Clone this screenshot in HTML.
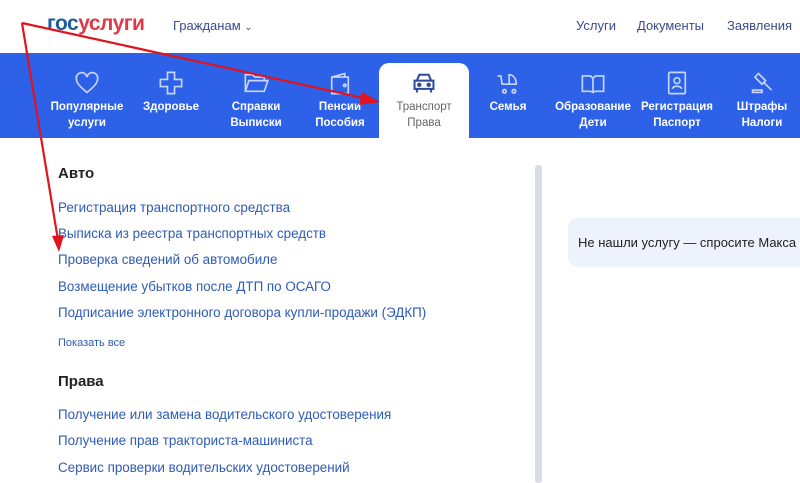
<!DOCTYPE html><html><head><meta charset="utf-8"><style>
*{margin:0;padding:0;box-sizing:border-box}
body{width:800px;height:483px;overflow:hidden;background:#fff;font-family:"Liberation Sans",sans-serif;position:relative}
.a{position:absolute;white-space:nowrap}
.top{color:#3a4b8c;font-size:13px}
.band{position:absolute;left:0;top:53px;width:800px;height:85px;background:#2d62e8}
.tab{position:absolute;left:379px;top:63px;width:90px;height:75px;background:#fff;border-radius:10px 10px 0 0}
.it{position:absolute;top:99px;width:90px;margin-left:-45px;text-align:center;color:#fff;font-size:11.5px;font-weight:bold;line-height:16px}
.it svg{position:absolute;left:32px;top:-29px}
.l{position:absolute;left:58px;color:#2e5bb5;font-size:13.4px;white-space:nowrap}
.h{position:absolute;left:58px;color:#222;font-size:15px;font-weight:bold}
</style></head><body>
<div class="a" style="left:47px;top:12px;font-size:21px;font-weight:bold;letter-spacing:-0.5px"><span style="color:#1d5d9b">гос</span><span style="color:#e03848">услуги</span></div>
<div class="a top" style="left:173px;top:18px">Гражданам <span style="font-size:10px">&#8964;</span></div>
<div class="a top" style="left:576px;top:18px">Услуги</div>
<div class="a top" style="left:637px;top:18px">Документы</div>
<div class="a top" style="left:727px;top:18px">Заявления</div>
<div class="band"></div><div class="tab"></div>
<div class="it" style="left:87px"><svg width="26" height="26" viewBox="0 0 22 22" fill="none" stroke="#c8d6ff" stroke-width="1.4"><path d="M11 19C5 14 2 11 2 7.5A4.5 4.5 0 0 1 11 6a4.5 4.5 0 0 1 9 1.5C20 11 17 14 11 19z"/></svg>Популярные<br>услуги</div>
<div class="it" style="left:171px"><svg width="26" height="26" viewBox="0 0 22 22" fill="none" stroke="#c8d6ff" stroke-width="1.4"><path d="M8 2h6v6h6v6h-6v6H8v-6H2V8h6z"/></svg>Здоровье</div>
<div class="it" style="left:256px"><svg width="26" height="26" viewBox="0 0 22 22" fill="none" stroke="#c8d6ff" stroke-width="1.4"><path d="M2 18V4h6l2 2h8v3M2 18l3-9h16l-3 9z"/></svg>Справки<br>Выписки</div>
<div class="it" style="left:340px"><svg width="26" height="26" viewBox="0 0 22 22" fill="none" stroke="#c8d6ff" stroke-width="1.4"><path d="M4 6l11-3v3M4 6h14v14H4z"/><circle cx="15" cy="13" r="1"/></svg>Пенсии<br>Пособия</div>
<div class="it" style="left:424px;color:#666;font-weight:normal"><svg width="26" height="26" viewBox="0 0 22 22" fill="none" stroke="#2d4a9c" stroke-width="1.7"><path d="M5 9l2-5h8l2 5M3 9h16v7H3zM5 16v3M17 16v3"/><circle cx="7" cy="12.5" r="1"/><circle cx="15" cy="12.5" r="1"/></svg>Транспорт<br>Права</div>
<div class="it" style="left:508px"><svg width="26" height="26" viewBox="0 0 22 22" fill="none" stroke="#c8d6ff" stroke-width="1.4"><path d="M2 5h3l1 7h12c0-4-2-8-6-8v8"/><circle cx="8" cy="18" r="1.5"/><circle cx="16" cy="18" r="1.5"/></svg>Семья</div>
<div class="it" style="left:593px"><svg width="26" height="26" viewBox="0 0 22 22" fill="none" stroke="#c8d6ff" stroke-width="1.4"><path d="M2 5h7l2 2 2-2h7v13h-7l-2 1-2-1H2zM11 7v12"/></svg>Образование<br>Дети</div>
<div class="it" style="left:677px"><svg width="26" height="26" viewBox="0 0 22 22" fill="none" stroke="#c8d6ff" stroke-width="1.4"><rect x="4" y="2" width="14" height="18" rx="1"/><circle cx="11" cy="9" r="2.5"/><path d="M7 16c1-3 7-3 8 0"/></svg>Регистрация<br>Паспорт</div>
<div class="it" style="left:762px"><svg width="26" height="26" viewBox="0 0 22 22" fill="none" stroke="#c8d6ff" stroke-width="1.4"><path d="M8 3l6 6-3 3-6-6zM12 10l7 7M3 19h8v-2H3z"/></svg>Штрафы<br>Налоги</div>
<div style="position:absolute;left:535px;top:165px;width:7px;height:318px;background:#d7dce6;border-radius:3px"></div>
<div class="h" style="top:165px">Авто</div>
<div class="l" style="top:200px">Регистрация транспортного средства</div>
<div class="l" style="top:226px">Выписка из реестра транспортных средств</div>
<div class="l" style="top:252px">Проверка сведений об автомобиле</div>
<div class="l" style="top:279px">Возмещение убытков после ДТП по ОСАГО</div>
<div class="l" style="top:305px">Подписание электронного договора купли-продажи (ЭДКП)</div>
<div class="l" style="top:337px;font-size:11px">Показать все</div>
<div class="h" style="top:373px">Права</div>
<div class="l" style="top:407px">Получение или замена водительского удостоверения</div>
<div class="l" style="top:433px">Получение прав тракториста-машиниста</div>
<div class="l" style="top:460px">Сервис проверки водительских удостоверений</div>
<div style="position:absolute;left:568px;top:218px;width:250px;height:49px;background:#edf2fc;border-radius:10px"></div>
<div class="a" style="left:578px;top:235px;font-size:13px;color:#222">Не нашли услугу — спросите Макса</div>
<svg style="position:absolute;left:0;top:0" width="800" height="483"><g stroke="#e0141e" stroke-width="2.2" fill="#e0141e"><line x1="22" y1="23" x2="368" y2="99"/><line x1="22" y1="23" x2="58" y2="240"/><polygon points="380,102 362,92 359,105" stroke="none"/><polygon points="59,252 52,236 64,235" stroke="none"/></g></svg>
</body></html>
